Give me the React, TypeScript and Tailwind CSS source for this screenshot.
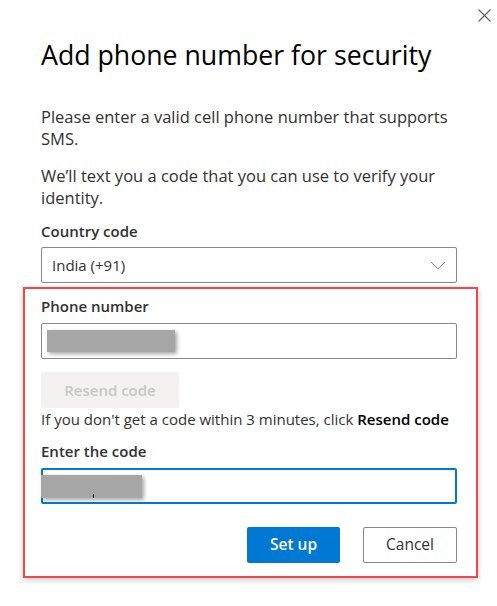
export default function App() {
	const font = { fontFamily: '"Segoe UI", "Open Sans", "Noto Sans", sans-serif' }

	return (
		<div
			className="relative w-[497px] h-[606px] bg-white text-[#323130] overflow-hidden"
			style={font}
		>
			{/* close */}
			<button className="absolute left-[477px] top-[8px] w-[15px] h-[15px] text-[#605e5c]">
				<svg viewBox="0 0 15 15" className="w-[15px] h-[15px]" fill="none" stroke="currentColor" strokeWidth="1.1">
					<path d="M1.5 1.5 L13.5 13.5 M13.5 1.5 L1.5 13.5" />
				</svg>
			</button>

			<div className="pt-[37px]">
				<h1 className="px-[41px] text-[26.7px] leading-[36px] font-normal text-black">
					Add phone number for security
				</h1>

				<div className="px-[41px] mt-[33px]">
					<p className="text-[16.5px] leading-[22px]">
						Please enter a valid cell phone number that supports SMS.
					</p>
					<p className="mt-[15px] text-[16.5px] leading-[22px]">
						We’ll text you a code that you can use to verify your identity.
					</p>

					<label className="block mt-[12px] text-[15px] leading-[21px] font-semibold">
						Country code
					</label>
					<div className="mt-[5px] h-[36px] w-[416px] border border-[#8a8886] rounded-[2px] flex items-center justify-between pl-[10px] pr-[10px] text-[15px]">
						<span>India (+91)</span>
						<svg viewBox="0 0 16 9" className="w-[16px] h-[9px] text-[#8a8886]" fill="none" stroke="currentColor" strokeWidth="1">
							<path d="M1 1 L8 8 L15 1" />
						</svg>
					</div>
				</div>

				<div className="mt-[4px] ml-[23px] w-[455px] h-[291px] border-2 border-[#f0474a] shadow-[0_2px_6px_rgba(0,0,0,0.22)] pl-[16px] pt-[7px]">
					<label className="block text-[15px] leading-[21px] font-semibold">Phone number</label>
					<div className="mt-[6px] h-[36px] w-[416px] border border-[#8a8886] rounded-[2px] flex items-center pl-[5px]">
						<div className="w-[128px] h-[22px] bg-[#a6a6a6] shadow-[2px_2px_4px_rgba(0,0,0,0.35)]" />
					</div>

					<button
						disabled
						className="block mt-[13px] w-[138px] h-[36px] rounded-[2px] bg-[#f3f2f1] text-[#c8c6c4] text-[15px] font-semibold"
					>
						Resend code
					</button>
					<p className="mt-[1px] text-[15px] leading-[21px]">
						If you don't get a code within 3 minutes, click{" "}
						<span className="font-semibold text-black">Resend code</span>
					</p>

					<label className="block mt-[11px] text-[15px] leading-[21px] font-semibold">
						Enter the code
					</label>
					<div className="mt-[6px] h-[36px] w-[416px] border-2 border-[#0078d4] rounded-[2px] relative flex items-center">
						<div className="w-[101px] h-[23px] bg-[#a6a6a6] shadow-[2px_2px_4px_rgba(0,0,0,0.35)] -ml-[2px]" />
						<div className="absolute left-[50px] top-[24px] w-px h-[4px] bg-black" />
					</div>

					<div className="mt-[23px] w-[416px] flex justify-end gap-[23px]">
						<button className="w-[93px] h-[36px] rounded-[2px] bg-[#0078d4] text-white text-[15.5px] font-semibold">
							Set up
						</button>
						<button className="w-[94px] h-[36px] rounded-[2px] border border-[#8a8886] bg-white text-[#323130] text-[15.5px]">
							Cancel
						</button>
					</div>
				</div>
			</div>
		</div>
	)
}
